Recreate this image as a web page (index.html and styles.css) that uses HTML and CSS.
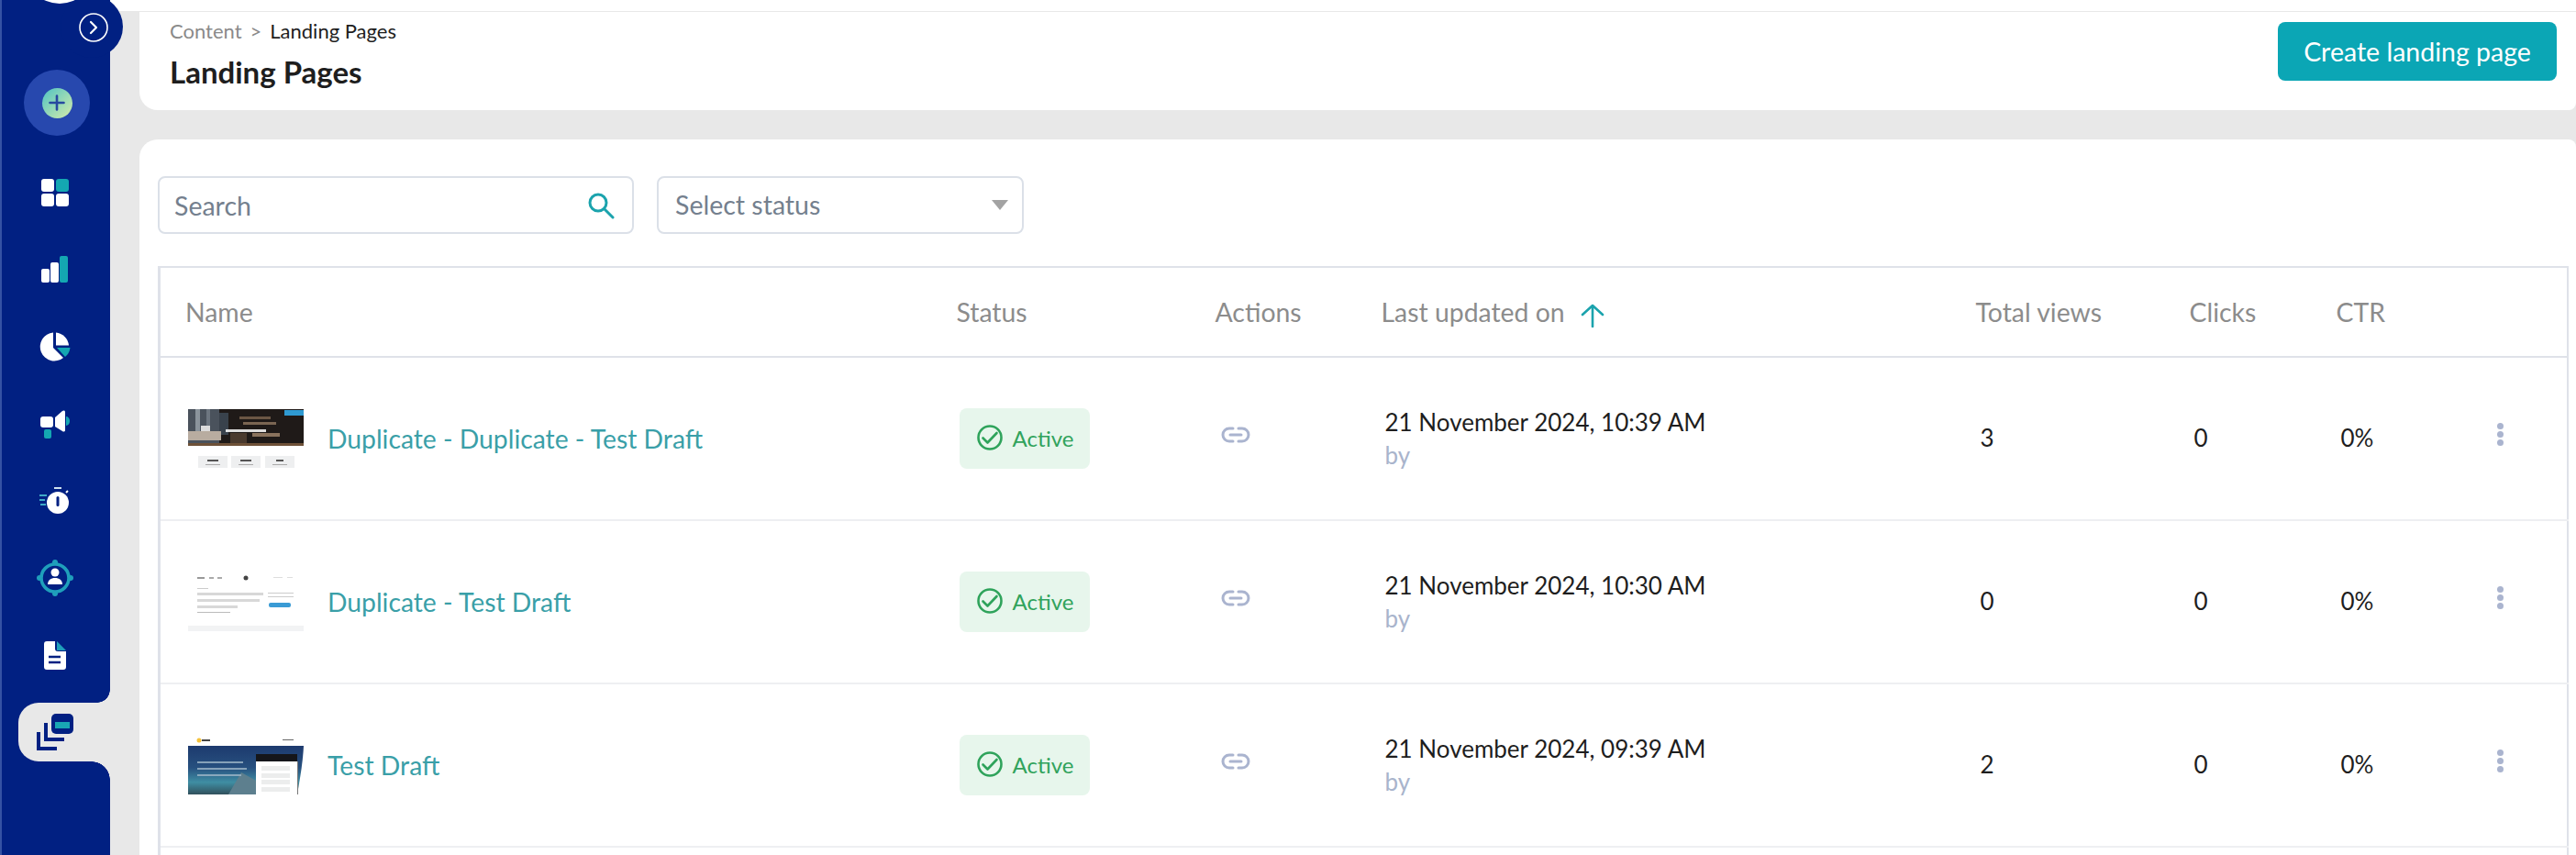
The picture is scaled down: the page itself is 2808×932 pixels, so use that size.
FILE: index.html
```html
<!DOCTYPE html>
<html lang="en">
<head>
    <meta charset="UTF-8">
    <meta name="viewport" content="width=device-width, initial-scale=1.0">
    <title>Landing Pages</title>
    <link rel="stylesheet" href="styles.css">
</head>
<body>
    <aside class="sidebar">
        <div class="avatar"></div>
        <div class="toggle">
            <svg width="32" height="32" viewBox="0 0 32 32" fill="none" stroke="#fff" stroke-width="1.6">
                <circle cx="16" cy="16" r="15"/>
                <path d="M13 10l6 6-6 6" stroke-width="2.2" stroke-linecap="round" stroke-linejoin="round"/>
            </svg>
        </div>
        <div class="add-button">
            <div class="add-inner">
                <svg width="22" height="22" viewBox="0 0 22 22" stroke="#27489f" stroke-width="2.600" stroke-linecap="round">
                    <path d="M11 3.500v15M3.500 11h15"/>
                </svg>
            </div>
        </div>
        <nav class="nav">
            <div class="nav-item">
                <svg width="30" height="30" viewBox="0 0 30 30">
                    <rect x="0" y="0" width="14" height="14" rx="3" fill="#fff"/>
                    <rect x="16" y="0" width="14" height="14" rx="3" fill="#14a7b2"/>
                    <rect x="0" y="16" width="14" height="14" rx="3" fill="#fff"/>
                    <rect x="16" y="16" width="14" height="14" rx="3" fill="#fff"/>
                </svg>
            </div>
            <div class="nav-item">
                <svg width="30" height="30" viewBox="0 0 30 30">
                    <rect x="0" y="14" width="9" height="15" rx="2" fill="#fff"/>
                    <rect x="10" y="7" width="9" height="22" rx="2" fill="#fff"/>
                    <rect x="20" y="0" width="9" height="29" rx="2" fill="#14a7b2"/>
                </svg>
            </div>
            <div class="nav-item">
                <svg width="34" height="34" viewBox="0 0 34 34">
                    <path d="M15 1.500A15.500 15.500 0 1 0 26 29L15 18z" fill="#fff"/>
                    <path d="M18 1.500A15.500 15.500 0 0 1 32 15.500H18z" fill="#fff"/>
                    <path d="M19 18h14.500a15.500 15.500 0 0 1-5.500 10z" fill="#14a7b2"/>
                </svg>
            </div>
            <div class="nav-item">
                <svg width="32" height="31" viewBox="0 0 32 31">
                    <rect x="0" y="7" width="14" height="12" rx="3" fill="#fff"/>
                    <path d="M16 8l8-7c1.500-1 3-.5 3 1v20c0 1.500-1.500 2-3 1l-8-5z" fill="#fff"/>
                    <path d="M28 7a4 5 0 0 1 0 10z" fill="#14a7b2"/>
                    <rect x="4" y="21" width="8" height="10" rx="2" fill="#14a7b2"/>
                </svg>
            </div>
            <div class="nav-item">
                <svg width="34" height="30" viewBox="0 0 34 30">
                    <rect x="16" y="0" width="8" height="2" fill="#cfe3ef"/>
                    <circle cx="20" cy="17" r="12" fill="#fff"/>
                    <rect x="18.500" y="10" width="3" height="11" rx="1.500" fill="#012082"/>
                    <path d="M0 9h8M0 14h6M1 19h6" stroke="#3fa9c6" stroke-width="2"/>
                    <path d="M29 6l2-2" stroke="#fff" stroke-width="2"/>
                </svg>
            </div>
            <div class="nav-item">
                <svg width="40" height="40" viewBox="0 0 40 40">
                    <circle cx="20" cy="20" r="15" fill="none" stroke="#1f9fbb" stroke-width="3.600"/>
                    <circle cx="20" cy="3" r="3" fill="#1f9fbb"/>
                    <circle cx="20" cy="37" r="3" fill="#1f9fbb"/>
                    <circle cx="3" cy="20" r="3" fill="#1f9fbb"/>
                    <circle cx="37" cy="20" r="3" fill="#1f9fbb"/>
                    <circle cx="20" cy="14" r="4.500" fill="#fff"/>
                    <path d="M12 27c0-4.500 3.500-7 8-7s8 2.500 8 7z" fill="#fff"/>
                </svg>
            </div>
            <div class="nav-item">
                <svg width="24" height="31" viewBox="0 0 24 31">
                    <path d="M3 0h9v8c0 2 1 3 3 3h9v17c0 2-1 3-3 3H3c-2 0-3-1-3-3V3c0-2 1-3 3-3z" fill="#fff"/>
                    <path d="M14 0l10 10H14z" fill="#1f9fbb"/>
                    <path d="M5 17h13M5 23h13" stroke="#012082" stroke-width="2.400"/>
                </svg>
            </div>
            <div class="nav-item active">
                <svg width="40" height="40" viewBox="0 0 40 40">
                    <rect x="16" y="0" width="24" height="22" rx="5" fill="#012082"/>
                    <rect x="20" y="9" width="16" height="7" fill="#19a7b4"/>
                    <path d="M8 10h4v16h18v4H8z" fill="#012082"/>
                    <path d="M0 20h4v16h18v4H0z" fill="#012082"/>
                </svg>
            </div>
        </nav>
    </aside>

    <main class="main">
        <div class="top-strip"></div>

        <header class="page-header">
            <div>
                <div class="breadcrumb"><span class="crumb">Content</span><span class="crumb">&gt;</span><span>Landing Pages</span></div>
                <h1 class="page-title">Landing Pages</h1>
            </div>
            <button class="button">Create landing page</button>
        </header>

        <section class="card">
            <div class="filters">
                <div class="field search">
                    <span>Search</span>
                    <svg width="30" height="30" viewBox="0 0 30 30" fill="none" stroke="#1ba3ad" stroke-width="3" stroke-linecap="round">
                        <circle cx="12" cy="12" r="9"/>
                        <path d="M19 19l9 9"/>
                    </svg>
                </div>
                <div class="field select">
                    <span>Select status</span>
                    <div class="caret"></div>
                </div>
            </div>

            <table class="table">
                <colgroup>
                    <col class="col-name">
                    <col class="col-status">
                    <col class="col-actions">
                    <col class="col-updated">
                    <col class="col-views">
                    <col class="col-clicks">
                    <col class="col-ctr">
                    <col class="col-more">
                </colgroup>
                <thead>
                    <tr>
                        <th class="th-name">Name</th>
                        <th>Status</th>
                        <th>Actions</th>
                        <th>Last updated on
                            <svg class="sort-arrow" width="28" height="26" viewBox="0 0 28 26" fill="none" stroke="#1ba3ad" stroke-width="2.600" stroke-linecap="round" stroke-linejoin="round">
                                <path d="M14 25V2M3 12L14 2l11 10"/>
                            </svg>
                        </th>
                        <th>Total views</th>
                        <th>Clicks</th>
                        <th>CTR</th>
                        <th></th>
                    </tr>
                </thead>
                <tbody>
                    <tr>
                        <td>
                            <div class="name-cell">
                                <svg class="thumb" width="126" height="64" viewBox="0 0 126 64">
                                    <rect width="126" height="40" fill="#1f1a18"/>
                                    <rect x="0" y="0" width="34" height="40" fill="#4a525c"/>
                                    <rect x="8" y="0" width="5" height="28" fill="#8b949c"/>
                                    <rect x="20" y="0" width="4" height="28" fill="#6d7680"/>
                                    <rect x="34" y="4" width="10" height="24" fill="#39424c"/>
                                    <rect x="0" y="24" width="36" height="10" fill="#b8aca0"/>
                                    <rect x="14" y="18" width="10" height="6" fill="#dcdcdc"/>
                                    <rect x="56" y="8" width="34" height="3" fill="#6b5644"/>
                                    <rect x="60" y="14" width="36" height="3" fill="#7a6552"/>
                                    <rect x="70" y="26" width="30" height="4" fill="#8a735d"/>
                                    <rect x="46" y="26" width="18" height="12" fill="#4a3a2e"/>
                                    <rect x="0" y="37" width="126" height="3" fill="#6e5138"/>
                                    <rect x="105" y="1" width="21" height="6" fill="#2f9ad2"/>
                                    <rect x="41" y="22" width="44" height="3" fill="#fff" opacity=".85"/>
                                    <rect x="11" y="51" width="32" height="13" fill="#eeeff0"/>
                                    <rect x="47" y="51" width="32" height="13" fill="#eeeff0"/>
                                    <rect x="84" y="51" width="32" height="13" fill="#eeeff0"/>
                                    <rect x="21" y="55" width="12" height="2" fill="#555"/>
                                    <rect x="57" y="55" width="12" height="2" fill="#555"/>
                                    <rect x="96" y="55" width="8" height="2" fill="#555"/>
                                    <rect x="19" y="60" width="16" height="1" fill="#aaa"/>
                                    <rect x="55" y="60" width="16" height="1" fill="#aaa"/>
                                    <rect x="92" y="60" width="16" height="1" fill="#aaa"/>
                                </svg>
                                <a class="page-link">Duplicate - Duplicate - Test Draft</a>
                            </div>
                        </td>
                        <td>
                            <div class="badge">
                                <svg width="28" height="28" viewBox="0 0 28 28" fill="none" stroke="#2fa35b" stroke-width="2.600" stroke-linecap="round" stroke-linejoin="round">
                                    <circle cx="14" cy="14" r="12.500"/>
                                    <path d="M6.500 14.500l5 5 10-10.500"/>
                                </svg>
                                Active
                            </div>
                        </td>
                        <td class="td-link">
                            <svg width="32" height="18" viewBox="0 0 32 18" fill="none" stroke="#aab4cf" stroke-width="3" stroke-linecap="round">
                                <path d="M13 2H9a7 7 0 0 0 0 14h4M19 2h4a7 7 0 0 1 0 14h-4M10 9h12"/>
                            </svg>
                        </td>
                        <td>
                            <div class="updated">21 November 2024, 10:39 AM</div>
                            <div class="by">by</div>
                        </td>
                        <td class="num">3</td>
                        <td class="num">0</td>
                        <td class="num">0%</td>
                        <td class="more"><div class="dots"><i></i><i></i><i></i></div></td>
                    </tr>
                    <tr>
                        <td>
                            <div class="name-cell">
                                <svg class="thumb" width="126" height="64" viewBox="0 0 126 64">
                                    <rect x="10" y="5" width="8" height="2" fill="#999"/>
                                    <rect x="23" y="5" width="5" height="2" fill="#aaa"/>
                                    <rect x="32" y="5" width="5" height="2" fill="#aaa"/>
                                    <circle cx="63" cy="6" r="2.500" fill="#444"/>
                                    <rect x="93" y="5" width="10" height="1" fill="#ddd"/>
                                    <rect x="108" y="5" width="6" height="1" fill="#ddd"/>
                                    <rect x="10" y="17" width="12" height="1" fill="#ccc"/>
                                    <rect x="10" y="22" width="72" height="3" fill="#d8d8d8"/>
                                    <rect x="10" y="29" width="68" height="3" fill="#d8d8d8"/>
                                    <rect x="10" y="36" width="44" height="3" fill="#d8d8d8"/>
                                    <rect x="10" y="43" width="36" height="1" fill="#bbb"/>
                                    <rect x="87" y="22" width="28" height="1" fill="#ccc"/>
                                    <rect x="87" y="26" width="28" height="1" fill="#ccc"/>
                                    <rect x="88" y="33" width="24" height="5" rx="2" fill="#3a9bd5"/>
                                    <rect x="0" y="58" width="126" height="6" fill="#f2f3f4"/>
                                </svg>
                                <a class="page-link">Duplicate - Test Draft</a>
                            </div>
                        </td>
                        <td>
                            <div class="badge">
                                <svg width="28" height="28" viewBox="0 0 28 28" fill="none" stroke="#2fa35b" stroke-width="2.600" stroke-linecap="round" stroke-linejoin="round">
                                    <circle cx="14" cy="14" r="12.500"/>
                                    <path d="M6.500 14.500l5 5 10-10.500"/>
                                </svg>
                                Active
                            </div>
                        </td>
                        <td class="td-link">
                            <svg width="32" height="18" viewBox="0 0 32 18" fill="none" stroke="#aab4cf" stroke-width="3" stroke-linecap="round">
                                <path d="M13 2H9a7 7 0 0 0 0 14h4M19 2h4a7 7 0 0 1 0 14h-4M10 9h12"/>
                            </svg>
                        </td>
                        <td>
                            <div class="updated">21 November 2024, 10:30 AM</div>
                            <div class="by">by</div>
                        </td>
                        <td class="num">0</td>
                        <td class="num">0</td>
                        <td class="num">0%</td>
                        <td class="more"><div class="dots"><i></i><i></i><i></i></div></td>
                    </tr>
                    <tr>
                        <td>
                            <div class="name-cell">
                                <svg class="thumb" width="126" height="64" viewBox="0 0 126 64">
                                    <defs>
                                        <linearGradient id="sea" x1="0" y1="0" x2="0" y2="1">
                                            <stop offset="0" stop-color="#1d3a6e"/>
                                            <stop offset=".45" stop-color="#27507f"/>
                                            <stop offset=".75" stop-color="#3f8ea3"/>
                                            <stop offset="1" stop-color="#31505c"/>
                                        </linearGradient>
                                    </defs>
                                    <circle cx="12" cy="5" r="2.500" fill="#f4c23c"/>
                                    <rect x="15" y="4" width="9" height="2" fill="#444"/>
                                    <rect x="103" y="4" width="12" height="1" fill="#666"/>
                                    <path d="M0 11h126c-1 18-3 30-7 53H0z" fill="url(#sea)"/>
                                    <path d="M44 64l14-24 18 10v14z" fill="#5d7f8e"/>
                                    <rect x="10" y="28" width="50" height="2" fill="#9fb6c8" opacity=".8"/>
                                    <rect x="10" y="35" width="54" height="2" fill="#9fb6c8" opacity=".8"/>
                                    <rect x="10" y="42" width="48" height="2" fill="#9fb6c8" opacity=".8"/>
                                    <rect x="74" y="20" width="45" height="8" fill="#15161a"/>
                                    <rect x="74" y="28" width="45" height="36" fill="#fff"/>
                                    <rect x="119" y="28" width="1" height="36" fill="#777"/>
                                    <rect x="80" y="33" width="31" height="5" fill="#eceded"/>
                                    <rect x="80" y="41" width="31" height="5" fill="#eceded"/>
                                    <rect x="80" y="48" width="31" height="5" fill="#eceded"/>
                                    <rect x="80" y="56" width="31" height="5" fill="#eceded"/>
                                </svg>
                                <a class="page-link">Test Draft</a>
                            </div>
                        </td>
                        <td>
                            <div class="badge">
                                <svg width="28" height="28" viewBox="0 0 28 28" fill="none" stroke="#2fa35b" stroke-width="2.600" stroke-linecap="round" stroke-linejoin="round">
                                    <circle cx="14" cy="14" r="12.500"/>
                                    <path d="M6.500 14.500l5 5 10-10.500"/>
                                </svg>
                                Active
                            </div>
                        </td>
                        <td class="td-link">
                            <svg width="32" height="18" viewBox="0 0 32 18" fill="none" stroke="#aab4cf" stroke-width="3" stroke-linecap="round">
                                <path d="M13 2H9a7 7 0 0 0 0 14h4M19 2h4a7 7 0 0 1 0 14h-4M10 9h12"/>
                            </svg>
                        </td>
                        <td>
                            <div class="updated">21 November 2024, 09:39 AM</div>
                            <div class="by">by</div>
                        </td>
                        <td class="num">2</td>
                        <td class="num">0</td>
                        <td class="num">0%</td>
                        <td class="more"><div class="dots"><i></i><i></i><i></i></div></td>
                    </tr>
                    <tr>
                        <td></td><td></td><td></td><td></td><td></td><td></td><td></td><td></td>
                    </tr>
                </tbody>
            </table>
        </section>
    </main>
</body>
</html>
```

FILE: styles.css
```css
* {
    box-sizing: border-box;
}
html, body {
    height: 932px;
    overflow: hidden;
}
body {
    display: flex;
    margin: 0;
    background-color: #ffffff;
    font-family: 'Lato', 'Open Sans', sans-serif;
    color: #1e1e1e;
}

/* sidebar */
.sidebar {
    position: relative;
    flex: 0 0 120px;
    height: 932px;
    padding-top: 76px;
    background-color: #012082;
    border-left: 2px solid #3552a3;
}
.avatar {
    position: absolute;
    left: 25px;
    top: -72px;
    width: 76px;
    height: 76px;
    border-radius: 50%;
    background-color: #ffffff;
}
.toggle {
    position: absolute;
    left: 64px;
    top: -5px;
    width: 68px;
    height: 68px;
    display: flex;
    align-items: center;
    justify-content: center;
    padding: 2px 0 0 4px;
    border-radius: 50%;
    background-color: #012082;
    z-index: 2;
}
.add-button {
    display: flex;
    align-items: center;
    justify-content: center;
    width: 72px;
    height: 72px;
    margin-left: 24px;
    border-radius: 50%;
    background-color: #2748ae;
}
.add-inner {
    display: flex;
    align-items: center;
    justify-content: center;
    width: 33px;
    height: 33px;
    border-radius: 50%;
    background: linear-gradient(135deg, #4fc3c4, #d6ecaa);
}
.nav {
    margin-top: 20px;
}
.nav-item {
    display: flex;
    align-items: center;
    justify-content: center;
    height: 84px;
    margin-left: -2px;
}
.nav-item.active {
    position: relative;
    height: 64px;
    margin: 10px 0 0 18px;
    padding-right: 20px;
    background-color: #e8e8e8;
    border-radius: 22px 0 0 22px;
}
.nav-item.active::before,
.nav-item.active::after {
    content: "";
    position: absolute;
    right: 0;
}
/* the sidebar curves into the selected tab */
.nav-item.active::before {
    top: -14px;
    width: 14px;
    height: 14px;
    background: radial-gradient(circle at 0 0, #012082 13.5px, #e8e8e8 14px);
}
.nav-item.active::after {
    bottom: -20px;
    width: 20px;
    height: 20px;
    background: radial-gradient(circle at 0 100%, #012082 19.5px, #e8e8e8 20px);
}

/* main area */
.main {
    flex: 1;
    height: 932px;
    overflow: hidden;
    background-color: #e8e8e8;
}
.top-strip {
    height: 13px;
    background-color: #ffffff;
    border-bottom: 1px solid #e8e8e8;
}
.page-header {
    display: flex;
    justify-content: space-between;
    align-items: flex-start;
    height: 107px;
    margin-left: 32px;
    padding: 11px 21px 0 33px;
    background-color: #ffffff;
    border-radius: 0 0 8px 20px;
}
.breadcrumb {
    font-size: 22px;
    line-height: 20px;
    height: 20px;
}
.crumb {
    color: #8a8a8a;
    margin-right: 9px;
}
.page-title {
    margin: 16px 0 0;
    font-size: 33px;
    line-height: 36px;
    font-weight: 700;
}
.button {
    width: 304px;
    height: 64px;
    color: #ffffff;
    font-family: inherit;
    font-size: 28.500px;
    background-color: #0ba6b5;
    border: none;
    border-radius: 8px;
}
.card {
    height: 780px;
    margin: 32px 0 0 32px;
    padding: 40px 11px 0 20px;
    background-color: #ffffff;
    border-radius: 20px 8px 0 0;
}
.filters {
    display: flex;
    gap: 25px;
    height: 63px;
}
.field {
    display: flex;
    align-items: center;
    justify-content: space-between;
    font-size: 28.500px;
    color: #74808e;
    background-color: #ffffff;
    border: 2px solid #dbe0e8;
    border-radius: 8px;
}
.search {
    width: 519px;
    padding: 0 19px 0 16px;
}
.select {
    width: 400px;
    padding: 0 15px 2px 18px;
}
.caret {
    width: 0;
    height: 0;
    margin-top: 2px;
    border-left: 9px solid transparent;
    border-right: 9px solid transparent;
    border-top: 11px solid #a3a3a3;
}

/* table */
.table {
    width: 2625px;
    margin-top: 35px;
    table-layout: fixed;
    border-collapse: collapse;
    border-top: 2px solid #dfe2e9;
    border-left: 3px solid #dfe2e9;
    border-right: 2px solid #dfe2e9;
}
.col-name { width: 869px; }
.col-status { width: 282px; }
.col-actions { width: 181px; }
.col-updated { width: 648px; }
.col-views { width: 233px; }
.col-clicks { width: 160px; }
.col-ctr { width: 170px; }
.col-more { width: 82px; }
thead tr {
    height: 98px;
    border-bottom: 2px solid #dfe2e9;
}
th {
    padding: 0;
    font-size: 28.400px;
    font-weight: 400;
    text-align: left;
    color: #8c8c8c;
}
.th-name {
    padding-left: 27px;
}
.sort-arrow {
    margin-left: 9px;
    vertical-align: middle;
}
tbody tr {
    height: 178px;
    border-bottom: 2px solid #eeeff2;
}
td {
    padding: 0;
    font-size: 26px;
}
.name-cell {
    display: flex;
    align-items: center;
    gap: 26px;
    padding-left: 30px;
}
.thumb {
    flex: none;
    filter: blur(0.4px);
}
.page-link {
    font-size: 28.300px;
    color: #3a9fa8;
}
.badge {
    display: flex;
    align-items: center;
    gap: 11px;
    width: 142px;
    height: 66px;
    margin-left: 3px;
    padding: 0 0 2px 19px;
    font-size: 24px;
    color: #31a35c;
    background-color: #e7f6ec;
    border-radius: 8px;
}
.td-link {
    padding: 0 0 10px 6px;
}
.updated {
    margin: -2px 0 0 4px;
    line-height: 32px;
}
.by {
    margin: 6px 0 0 4px;
    font-size: 26px;
    line-height: 28px;
    color: #a9b4cc;
}
.num {
    padding-left: 5px;
    padding-bottom: 2px;
}
.more {
    padding-bottom: 10px;
}
.dots {
    display: flex;
    flex-direction: column;
    gap: 2px;
    margin-left: 5px;
}
.dots i {
    width: 7px;
    height: 7px;
    border-radius: 50%;
    background-color: #aab4cf;
}
```
